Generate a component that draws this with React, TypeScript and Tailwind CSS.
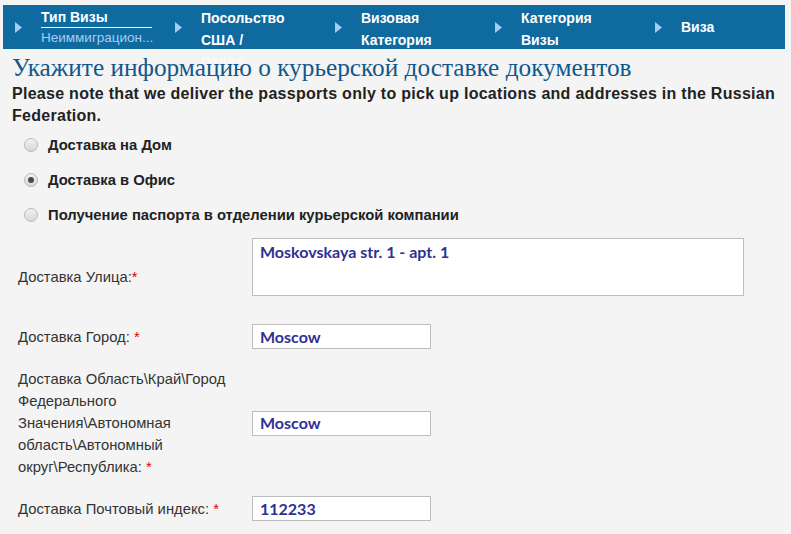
import React from 'react';

const Arrow = () => (
  <svg width="7" height="11" viewBox="0 0 7 11" className="shrink-0">
    <path d="M0 0 L7 5.5 L0 11 Z" fill="#a9cdf2" />
  </svg>
);

const Radio = ({ checked }: { checked?: boolean }) => (
  <span className="w-[14px] h-[14px] rounded-full border border-[#b9b9b9] bg-gradient-to-b from-[#f2f2f2] to-[#d8d8d8] flex items-center justify-center shrink-0">
    {checked && <span className="w-[6px] h-[6px] rounded-full bg-[#4a4a4a]" />}
  </span>
);

const Star = () => <span className="text-[#e00000]">*</span>;

const valueCls = "font-['Lato',sans-serif] font-bold text-[16px] text-[#2e3192] pl-[7px]";

export default function App() {
  return (
    <div className="min-h-[534px] w-[791px] bg-[#f4f4f4] overflow-hidden font-['Liberation_Sans',Arial,sans-serif]">
      {/* steps bar */}
      <div className="ml-[3px] mt-[5px] w-[782px] h-[44px] bg-[#0e6a9f] flex text-white text-[14px] font-bold">
        <div className="w-[160px] flex items-center pl-[12px]">
          <Arrow />
          <div className="ml-[19px] pt-[2px] self-start">
            <div className="leading-[20px] w-[111px] border-b border-white">Тип Визы</div>
            <div className="leading-[18px] mt-[1px] font-normal text-[13.5px] text-[#a9cdf2]">Неиммиграцион...</div>
          </div>
        </div>
        <div className="w-[160px] flex items-center pl-[12px]">
          <Arrow />
          <div className="ml-[19px] pt-[2px] self-start leading-[22px]">
            <div>Посольство</div>
            <div>США /</div>
            <div className="text-[#fafafa]">Отдел</div>
          </div>
        </div>
        <div className="w-[160px] flex items-center pl-[12px]">
          <Arrow />
          <div className="ml-[19px] pt-[2px] self-start leading-[22px]">
            <div>Визовая</div>
            <div>Категория</div>
          </div>
        </div>
        <div className="w-[160px] flex items-center pl-[12px]">
          <Arrow />
          <div className="ml-[19px] pt-[2px] self-start leading-[22px]">
            <div>Категория</div>
            <div>Визы</div>
          </div>
        </div>
        <div className="flex-1 flex items-center pl-[12px]">
          <Arrow />
          <div className="ml-[19px]">Виза</div>
        </div>
      </div>

      <h1 className="mt-[4px] ml-[12px] font-['Liberation_Serif',serif] text-[25.3px] leading-[28px] text-[#11588a]">
        Укажите информацию о курьерской доставке документов
      </h1>
      <p className="ml-[12px] mt-[2px] w-[775px] text-[16px] font-bold leading-[22px] tracking-[0.28px] text-[#222]">
        Please note that we deliver the passports only to pick up locations and addresses in the Russian Federation.
      </p>

      <div className="ml-[24px] mt-[7px] flex flex-col gap-[13px] text-[14.8px] font-bold text-[#222]">
        <label className="flex items-center gap-[10px] h-[22px]">
          <Radio />
          <span>Доставка на Дом</span>
        </label>
        <label className="flex items-center gap-[10px] h-[22px]">
          <Radio checked />
          <span>Доставка в Офис</span>
        </label>
        <label className="flex items-center gap-[10px] h-[22px]">
          <Radio />
          <span>Получение паспорта в отделении курьерской компании</span>
        </label>
      </div>

      <div className="mt-[12px] ml-[18px] text-[14.8px] leading-[22px] text-[#333]">
        <div className="flex items-center">
          <div className="w-[234px] pt-[20px]">Доставка Улица:<Star /></div>
          <div className="w-[492px] h-[58px] bg-white border border-[#bdbdbd] pt-[2px]">
            <div className={valueCls}>Moskovskaya str. 1 - apt. 1</div>
          </div>
        </div>
        <div className="flex items-center mt-[28px]">
          <div className="w-[234px]">Доставка Город: <Star /></div>
          <div className="w-[179px] h-[25px] bg-white border border-[#bdbdbd] flex items-center">
            <div className={valueCls}>Moscow</div>
          </div>
        </div>
        <div className="flex items-center mt-[19px]">
          <div className="w-[234px] pr-[10px]">
            Доставка Область\Край\Город Федерального Значения\Автономная область\Автономный округ\Республика: <Star />
          </div>
          <div className="w-[179px] h-[25px] bg-white border border-[#bdbdbd] flex items-center">
            <div className={valueCls}>Moscow</div>
          </div>
        </div>
        <div className="flex items-center mt-[18px]">
          <div className="w-[234px]">Доставка Почтовый индекс: <Star /></div>
          <div className="w-[179px] h-[25px] bg-white border border-[#bdbdbd] flex items-center">
            <div className={valueCls}>112233</div>
          </div>
        </div>
      </div>
    </div>
  );
}
